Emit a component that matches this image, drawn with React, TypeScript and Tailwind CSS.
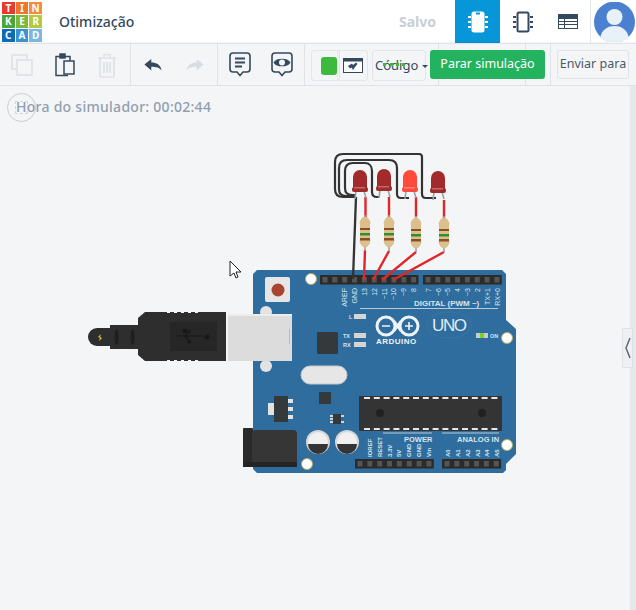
const sans = "font-['Noto_Sans','Open_Sans',sans-serif]";

const logo = [
  ["T", "bg-[#e8382f]"], ["I", "bg-[#f2742b]"], ["N", "bg-[#f58d3f]"],
  ["K", "bg-[#4aa63c]"], ["E", "bg-[#7cb83c]"], ["R", "bg-[#b5c93d]"],
  ["C", "bg-[#0f6cb4]"], ["A", "bg-[#3c93d2]"], ["D", "bg-[#79b8e3]"],
];

function Logo() {
  return (
    <div className="grid grid-cols-3 gap-[1px] w-[40px] h-[40px] ml-[2px] shrink-0">
      {logo.map(([l, c]) => (
        <div key={l + c} className={`${c} flex items-center justify-center text-white text-[10px] font-bold leading-none`}>{l}</div>
      ))}
    </div>
  );
}

function Divider() {
  return <div className="w-px h-[41px] bg-[#dfe3e8] shrink-0" />;
}

function Copy() {
  return (
    <svg width="22" height="22" viewBox="0 0 22 22" fill="none" stroke="#dde1e6" strokeWidth="1.600">
      <path d="M6 15H1V1h15v5" />
      <rect x="6" y="6" width="15" height="15" />
    </svg>
  );
}

function Paste() {
  return (
    <svg width="20" height="24" viewBox="0 0 20 24" fill="none" stroke="#34495e" strokeWidth="1.500">
      <path d="M13 22.500H1V3.500h14V8" />
      <rect x="5" y="1" width="5" height="4" fill="#34495e" />
      <rect x="9" y="8" width="10" height="13" fill="#f4f5f7" />
    </svg>
  );
}

function Trash() {
  return (
    <svg width="20" height="25" viewBox="0 0 20 25" fill="none" stroke="#dde1e6" strokeWidth="1.600">
      <path d="M1 5h18M7 4V1.500h6V4M3 5v18a1 1 0 0 0 1 1h12a1 1 0 0 0 1-1V5M7 9v11M10 9v11M13 9v11" />
    </svg>
  );
}

function Undo({ color, flip }: { color: string; flip?: boolean }) {
  return (
    <svg width="20" height="12" viewBox="0 0 20 14" className={flip ? "-scale-x-100" : ""}>
      <path d="M0 6.500 8 0v4c6 0 11 2.500 12 9.500-2.500-3.500-6-4.500-12-4.500v4.500z" fill={color} />
    </svg>
  );
}

function Note({ eye }: { eye?: boolean }) {
  return (
    <svg width="22" height="26" viewBox="0 0 22 26" fill="none" stroke="#34495e" strokeWidth="1.600">
      <path d="M4 1h14a3 3 0 0 1 3 3v13a3 3 0 0 1-3 3h-4l-3 3.500L8 20H4a3 3 0 0 1-3-3V4a3 3 0 0 1 3-3z" />
      {eye ? (
        <>
          <path d="M3.500 10.500C6 6.500 16 6.500 18.500 10.500 16 14.500 6 14.500 3.500 10.500z" fill="#34495e" />
          <circle cx="11" cy="10.500" r="3" fill="#f4f5f7" stroke="none" />
        </>
      ) : (
        <path d="M6 6.500h10M6 10.500h10M6 14.500h7" strokeWidth="2" />
      )}
    </svg>
  );
}

function ChipIcon({ color, fill }: { color: string; fill?: boolean }) {
  return (
    <svg width="20" height="22" viewBox="0 0 20 22" fill="none" stroke={color}>
      <rect x="4.500" y="1.500" width="11" height="19" rx="1.500" fill={fill ? color : "none"} strokeWidth="2" />
      {fill && <path d="M8 1.500h4v2H8z" fill="#0796d8" stroke="none" />}
      <path d="M0 6h3M0 11h3M0 16h3M17 6h3M17 11h3M17 16h3" strokeWidth="2" />
    </svg>
  );
}

function TableIcon() {
  return (
    <svg width="20" height="15" viewBox="0 0 20 15">
      <rect width="20" height="15" fill="#34495e" />
      <path d="M1 5h5v2H1zM7 5h12v2H7zM1 8h5v2H1zM7 8h12v2H7zM1 11h5v3H1zM7 11h12v3H7z" fill="#fff" />
    </svg>
  );
}

function Avatar() {
  return (
    <svg width="43" height="40" viewBox="0 0 43 40">
      <circle cx="21.500" cy="20" r="20.500" fill="#4b80d0" />
      <circle cx="21.500" cy="15" r="8" fill="#e8f0f9" />
      <path d="M7 36c2-9 8-12 14.500-12S34 27 36 36c-4 3-9 4.500-14.500 4.500S11 39 7 36z" fill="#e8f0f9" />
    </svg>
  );
}

function Header() {
  return (
    <header className="h-[43px] bg-white flex items-center shrink-0">
      <Logo />
      <span className="ml-[17px] text-[14px] font-medium text-[#34495e]">Otimização</span>
      <span className="ml-auto mr-[19px] text-[14px] font-bold text-[#c8ced6]">Salvo</span>
      <div className="w-[45px] h-[43px] bg-[#0796d8] flex items-center justify-center">
        <ChipIcon color="#ffffff" fill />
      </div>
      <div className="w-[45px] h-[43px] flex items-center justify-center">
        <ChipIcon color="#34495e" />
      </div>
      <div className="w-[45px] h-[43px] flex items-center justify-center">
        <TableIcon />
      </div>
      <div className="w-px h-[43px] bg-[#e4e7eb]" />
      <div className="ml-[2px] h-[43px] flex items-center overflow-hidden"><Avatar /></div>
    </header>
  );
}

function Toolbar() {
  return (
    <div className="relative h-[43px] bg-[#f4f5f7] border-y border-y-[#dfe3e8] flex items-center shrink-0 shadow-[0_-1px_2px_rgba(0,0,0,0.05)]">
      <div className="w-[130px] flex items-center justify-between pl-[11px] pr-[13px] mt-[1px]">
        <Copy /><Paste /><Trash />
      </div>
      <Divider />
      <div className="w-[86px] flex items-center justify-between pl-[12px] pr-[12px]">
        <Undo color="#34495e" /><Undo color="#d8dde3" flip />
      </div>
      <Divider />
      <div className="w-[86px] flex items-center justify-between pl-[11px] pr-[11px] mt-[1px]">
        <Note /><Note eye />
      </div>
      <Divider />
      <div className="absolute left-[438px] top-0"><Divider /></div>
      <div className="absolute left-[525px] top-0"><Divider /></div>
      <div className="absolute left-[550px] top-0"><Divider /></div>

      <div className="absolute left-[311px] top-[6px] w-[29px] h-[31px] border border-[#e2e5e9] rounded-[3px]" />
      <div className="absolute left-[321px] top-[13px] w-[16px] h-[18px] bg-[#3dba3d] rounded-[3px]" />
      <div className="absolute left-[337px] top-[6px] w-[31px] h-[31px] border border-[#e2e5e9] rounded-[3px] flex items-center justify-center">
        <svg width="20" height="15" viewBox="0 0 20 15">
          <rect x="0.500" y="0.500" width="19" height="14" fill="#fff" stroke="#34495e" />
          <rect width="20" height="3.500" fill="#34495e" />
          <path d="M5 8l4-2.500 1 1.500 3-2.500 1.500 1.500L12 9l-2 3-1.500-2.500L7 10.500z" fill="#34495e" />
        </svg>
      </div>
      <div className="absolute left-[372px] top-[6px] w-[54px] h-[31px] border border-[#e2e5e9] rounded-[3px] flex items-center pl-[2px] text-[13px] text-[#34495e]">
        Código
        <span className="ml-[4px] mt-[2px] w-0 h-0 border-x-[3px] border-x-transparent border-t-[3px] border-t-[#34495e]" />
      </div>
      <div className="absolute left-[383px] top-[19px] w-[22px] h-[3px] border-t-[3px] border-dotted border-t-[#3dba3d]" />
      <div className="absolute left-[430px] top-[6px] w-[115px] h-[29px] bg-[#23b35f] rounded-[3px] flex items-center justify-center text-[12.500px] text-white">
        Parar simulação
      </div>
      <div className="absolute left-[557px] top-[6px] w-[72px] h-[29px] border border-[#dfe3e8] rounded-[3px] flex items-center justify-center text-[12.500px] text-[#4a5a6a]">
        Enviar para
      </div>
    </div>
  );
}

const leds = [
  { x: 360, y: 181, c: "#a32a2a" },
  { x: 384, y: 180, c: "#a32a2a" },
  { x: 410, y: 181, c: "#ff4a3d" },
  { x: 438, y: 182, c: "#a32a2a" },
];

function Led({ x, y, c }: { x: number; y: number; c: string }) {
  return (
    <g>
      <path d={`M${x - 4} ${y + 10}l-1 8M${x + 4} ${y + 10}l2 7`} stroke="#9aa0a6" strokeWidth="1.600" fill="none" />
      <path d={`M${x - 7} ${y + 9}v-13a7 7 0 0 1 14 0v13z`} fill={c} />
      <rect x={x - 8} y={y + 6} width="16" height="5" rx="2" fill={c} />
      <rect x={x - 6} y={y + 6} width="11" height="1.500" fill="#fff" opacity="0.3" />
    </g>
  );
}

function Resistor({ x, y }: { x: number; y: number }) {
  return (
    <g>
      <path d={`M${x} ${y - 3}v36`} stroke="#9aa0a6" strokeWidth="1.600" />
      <path d={`M${x - 3} ${y}a4 4 0 0 1 6 0c2 2 3 5 2 7v14c1 2 0 5-2 7a4 4 0 0 1-6 0c-2-2-3-5-2-7v-14c-1-2 0-5 2-7z`} fill="#dcc08c" />
      <rect x={x - 5} y={y + 10} width="10" height="2" fill="#8a4f28" />
      <rect x={x - 5} y={y + 15} width="10" height="2.500" fill="#2f8f2f" />
      <rect x={x - 5} y={y + 20} width="10" height="2.500" fill="#8a4f28" />
    </g>
  );
}

function Pins({ x, y, n }: { x: number; y: number; n: number }) {
  return (
    <g>
      <rect x={x} y={y} width={n * 9.850} height="9.500" fill="#2b2b2b" />
      {Array.from({ length: n }, (_, i) => (
        <rect key={i} x={x + 2.500 + i * 9.850} y={y + 2} width="5" height="5.500" fill="#555" />
      ))}
    </g>
  );
}

function Hole({ x, y }: { x: number; y: number }) {
  return <circle cx={x} cy={y} r="5.500" fill="#fff" stroke="#b9a765" strokeWidth="1" />;
}

function Circuit() {
  const topLabels = [
    ["AREF", 344], ["GND", 354], ["13", 364], ["12", 374], ["~11", 384], ["~10", 393], ["~9", 403], ["8", 413],
    ["7", 428], ["~6", 438], ["~5", 447], ["4", 457], ["~3", 467], ["2", 477], ["TX+1", 487], ["RX+0", 497],
  ] as const;
  const botLabels = [
    ["IOREF", 370], ["RESET", 380], ["3.3V", 390], ["5V", 399], ["GND", 409], ["GND", 419], ["Vin", 429],
    ["A0", 448], ["A1", 458], ["A2", 468], ["A3", 478], ["A4", 487], ["A5", 497],
  ] as const;
  return (
    <svg width="636" height="524" viewBox="0 86 636 524" className="absolute left-0 top-0" fontFamily="'Liberation Sans',sans-serif">
      {/* usb cable */}
      <rect x="88" y="328" width="30" height="18" rx="9" fill="#2e2e2e" />
      <path d="M100 338l-2-1 3-3-1 3 2 1-3 3z" fill="#e8c53a" />
      <rect x="110" y="325" width="28" height="24" fill="#2e2e2e" />
      <ellipse cx="116.500" cy="337" rx="2" ry="8" fill="#1f1f1f" />
      <ellipse cx="132.500" cy="337" rx="2" ry="8" fill="#1f1f1f" />
      <path d="M138 318l7-6h81v49h-81l-7-6z" fill="#2e2e2e" />
      {[167, 174, 181, 188, 195].map(x => (
        <g key={x}>
          <rect x={x} y="312" width="3" height="1" fill="#f4f5f7" />
          <rect x={x} y="360" width="3" height="1" fill="#f4f5f7" />
        </g>
      ))}
      <rect x="170" y="322" width="47" height="29" fill="#262626" />
      <path d="M177 336h26M185 336l5-5h-5M185 336l5 6h-1" stroke="#171717" strokeWidth="1.200" fill="none" />
      <rect x="183" y="329" width="4" height="4" fill="#171717" />
      <circle cx="189" cy="342" r="1.500" fill="#171717" />
      <circle cx="207" cy="337" r="2.500" fill="#171717" />

      {/* board */}
      <path d="M257 270h245l4 4v46l10 9v125l-10 10v6l-3 3H257l-4-4V274z" fill="#2e6d9d" />
      <circle cx="266" cy="312" r="6" fill="#e3e3e3" />
      <circle cx="266" cy="366" r="6" fill="#e3e3e3" />
      <rect x="228" y="314" width="64" height="47" fill="#dcdcdc" />
      <rect x="228" y="314" width="64" height="2" fill="#ececec" />
      <rect x="289" y="329" width="1" height="15" fill="#bbb" />

      <rect x="265" y="277" width="25" height="25" rx="2" fill="#e6e6e6" />
      <circle cx="278" cy="290" r="6.500" fill="#a8442f" />
      <Hole x={311} y={279} />
      <Hole x={507} y={338} />
      <Hole x={507} y={445} />
      <Hole x={307} y={464} />

      <Pins x={320} y={275} n={10} />
      <Pins x={423} y={275} n={8} />
      <Pins x={355} y={459} n={8} />
      <Pins x={442} y={459} n={6} />

      {topLabels.map(([t, x]) => (
        <text key={t} transform={`translate(${x + 2.500} 288) rotate(-90)`} textAnchor="end" fontSize="7" fill="#d9e4ee">{t}</text>
      ))}
      {botLabels.map(([t, x], i) => (
        <text key={t + i} transform={`translate(${x + 2} 457) rotate(-90)`} fontSize="6" fontWeight="bold" fill="#d9e4ee">{t}</text>
      ))}
      <text x="414" y="306" fontSize="8" fontWeight="bold" fill="#d9e4ee">DIGITAL (PWM ~)</text>
      <path d="M360 308.500h138M383 433h49M442 433h57" stroke="#d9e4ee" strokeWidth="0.800" />
      <text x="404" y="442" fontSize="7.500" fontWeight="bold" fill="#d9e4ee">POWER</text>
      <text x="457" y="442" fontSize="7.500" fontWeight="bold" fill="#d9e4ee">ANALOG IN</text>

      {/* logo */}
      <circle cx="386" cy="326" r="9" fill="none" stroke="#eef3f7" strokeWidth="3" />
      <circle cx="409" cy="326" r="9" fill="none" stroke="#eef3f7" strokeWidth="3" />
      <path d="M394 321l7 10M394 331l7-10" stroke="#eef3f7" strokeWidth="2.500" />
      <path d="M382 326h8M405 326h8M409 322v8" stroke="#eef3f7" strokeWidth="1.600" />
      <text x="376" y="344" fontSize="8" fontWeight="bold" letterSpacing="0.500" fill="#eef3f7">ARDUINO</text>
      <text x="432" y="331" fontSize="17" fill="#e3ecf3" textLength="35">UNO</text>
      <ellipse cx="449" cy="325" rx="22" ry="13" fill="none" stroke="#4a85b1" strokeWidth="0.700" strokeDasharray="1 1" />

      <text x="349" y="319" fontSize="5.500" fontWeight="bold" fill="#d9e4ee">L</text>
      <text x="343" y="338" fontSize="5.500" fontWeight="bold" fill="#d9e4ee">TX</text>
      <text x="343" y="347" fontSize="5.500" fontWeight="bold" fill="#d9e4ee">RX</text>
      <rect x="354" y="314" width="12" height="5" fill="#d5d5d5" />
      <rect x="354" y="333" width="12" height="5" fill="#d5d5d5" />
      <rect x="354" y="342" width="12" height="5" fill="#d5d5d5" />
      <rect x="476" y="333" width="12" height="5" fill="#c2ced6" />
      <rect x="480" y="333" width="4" height="5" fill="#7ed321" />
      <text x="490" y="338" fontSize="5.500" fontWeight="bold" fill="#d9e4ee">ON</text>

      <rect x="317" y="332" width="21" height="22" rx="1" fill="#34393b" />
      <rect x="301" y="366" width="46" height="18" rx="9" fill="#e6e6e6" stroke="#c9c9c9" />
      <rect x="319" y="392" width="12" height="12" fill="#34393b" />
      <rect x="274" y="396" width="14" height="26" fill="#34393b" />
      <rect x="268" y="403" width="6" height="12" fill="#e3e3e3" />
      <path d="M288 399h5v4h-5zM288 407h5v4h-5zM288 415h5v4h-5z" fill="#e3e3e3" />
      <rect x="333" y="414" width="8" height="10" fill="#34393b" />
      <path d="M330 415h3v2h-3zM330 418h3v2h-3zM330 421h3v2h-3zM341 415h3v2h-3zM341 421h3v2h-3z" fill="#d5d5d5" />

      <rect x="359" y="396" width="143" height="35" rx="1" fill="#343434" />
      {Array.from({ length: 14 }, (_, i) => (
        <g key={i}>
          <rect x={364 + i * 9.800} y="397" width="6" height="2" fill="#e6e6e6" />
          <rect x={364 + i * 9.800} y="428" width="6" height="2" fill="#e6e6e6" />
        </g>
      ))}
      <circle cx="380" cy="413" r="4" fill="#202020" />
      <circle cx="482" cy="413" r="4" fill="#202020" />

      {/* jack and caps */}
      <rect x="243" y="428" width="10" height="36" rx="1" fill="#2a2a2a" />
      <rect x="252" y="430" width="45" height="36" rx="4" fill="#363636" />
      <rect x="243" y="462" width="54" height="5" fill="#242424" />
      {[318, 347].map(x => (
        <g key={x}>
          <circle cx={x} cy="442" r="12" fill="#d6d6d6" />
          <circle cx={x} cy="442" r="10" fill="#f0f0f0" />
          <path d={`M${x - 10} 444a10 10 0 0 0 20 0z`} fill="#343434" />
        </g>
      ))}

      {/* wires */}
      <path d="M356 197l-3 82" stroke="#333" strokeWidth="2.300" fill="none" />
      <path d="M355 197h-12c-5 0-8-3-8-8v-27c0-5 3-8 8-8h76c2 0 3 1 3 3v37c0 3 2 4 4 4h10" stroke="#333" strokeWidth="2.200" fill="none" />
      <path d="M355 196h-9c-5 0-7-3-7-7v-21c0-5 3-8 8-8h42c5 0 8 3 8 8v26c0 3 2 4 4 4h8" stroke="#333" strokeWidth="2.200" fill="none" />
      <path d="M355 195h-3c-5 0-7-3-7-7v-17c0-5 3-8 8-8h12c4 0 7 3 7 8v21c0 3 2 5 5 5h2" stroke="#333" strokeWidth="2.200" fill="none" />
      <path d="M365.500 197v20M365 250l-1 30M389 197v20M389 251l-16 29M416 197v20M416 252l-34 28M444 200v18M444 252l-51 28" stroke="#e0262a" strokeWidth="2.400" fill="none" />

      {leds.map(l => <Led key={l.x} {...l} />)}
      <Resistor x={365} y={218} />
      <Resistor x={389} y={218} />
      <Resistor x={416} y={219} />
      <Resistor x={444} y={219} />

      {/* mouse cursor */}
      <path d="M230 261v15l4-3 2 5 2-1-2-5h5z" fill="#fff" stroke="#222" strokeWidth="1" />
    </svg>
  );
}

export default function App() {
  return (
    <div className={`${sans} w-[636px] h-[610px] overflow-hidden flex flex-col bg-[#f4f5f7]`}>
      <Header />
      <Toolbar />
      <main className="relative flex-1">
        <Circuit />
        <div className="absolute right-0 top-0 bottom-0 w-[6px] bg-[#e6e8eb]" />
        <div className="absolute left-[622px] top-[242px] w-[11px] h-[40px] bg-[#eef0f3] border border-[#dfe3e8] flex items-center justify-center">
          <svg width="8" height="22" viewBox="0 0 8 22" fill="none" stroke="#5d6a76" strokeWidth="1.500"><path d="M6 1 2 11l4 10" /></svg>
        </div>
        <div className="absolute left-[7px] top-[7px] w-[29px] h-[29px] rounded-full border border-[#c9cdd2] flex items-center justify-center">
          <div className="w-[13px] h-[13px] border border-dashed border-[#d4d8dc]" />
        </div>
        <div className="absolute left-[16px] top-[10px] text-[14px] font-medium text-[#8f9fae] tracking-[0.27px]">
          Hora do simulador: 00:02:44
        </div>
      </main>
    </div>
  );
}
